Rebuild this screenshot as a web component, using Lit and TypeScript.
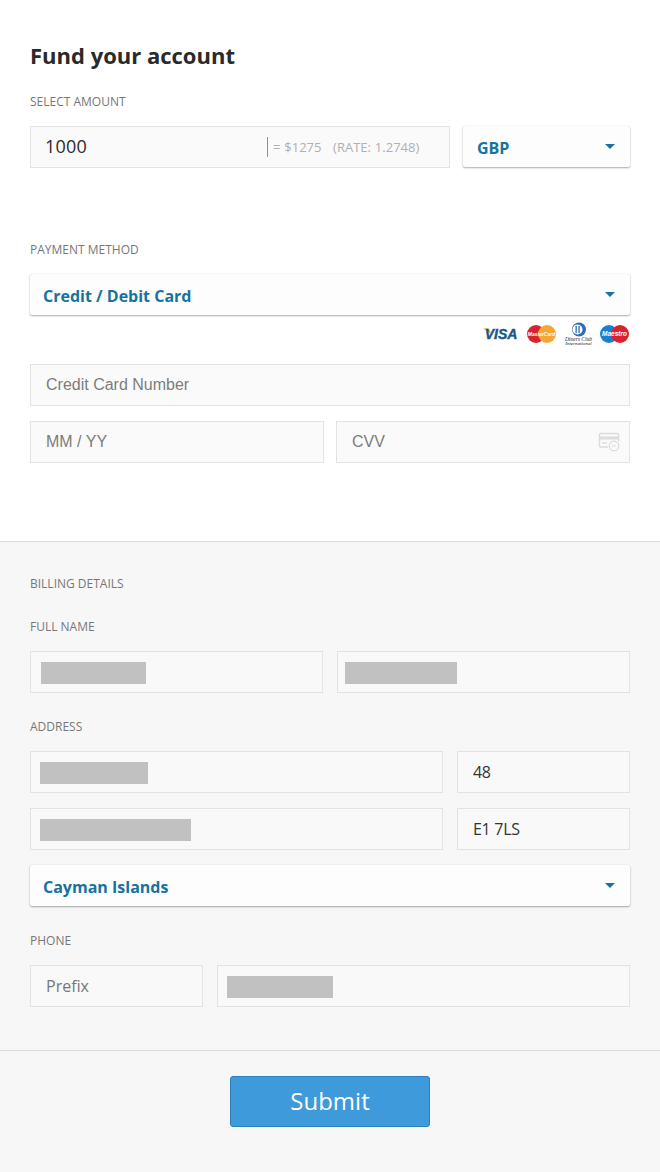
import { LitElement, html, css } from "lit";
import { customElement } from "lit/decorators.js";

@customElement("app-root")
export class AppRoot extends LitElement {
  static styles = css`
    :host { display: block; width: 660px; height: 1172px; background: #fff; font-family: "Open Sans", sans-serif; color: #2b2b2b; overflow: hidden; }
    * { box-sizing: border-box; }
    .top { height: 541px; padding: 40px 30px 0; background: #fff; }
    h1 { margin: 0; font-size: 22px; line-height: 30px; font-weight: 700; color: #2a2a2a; }
    .label { font-size: 12px; line-height: 16px; color: #777; text-transform: uppercase; }
    .l1 { margin-top: 24px; }
    .l2 { margin-top: 74px; }
    .row { display: flex; }
    .amount-row { margin-top: 16px; gap: 13px; align-items: flex-start; }
    .input { height: 42px; border: 1px solid #e3e3e3; background: #fafafa; display: flex; align-items: center; padding-left: 15px; font-size: 16px; position: relative; flex: none; }
    .amount { width: 420px; font-size: 18px; color: #2b2b2b; padding-left: 14px; padding-bottom: 2px; letter-spacing: 0.2px; }
    .conv { position: absolute; left: 236px; top: 10px; height: 20px; border-left: 1px solid #8f8f8f; padding-left: 5px; font-size: 13px; line-height: 20px; color: #b0b0b0; white-space: pre; letter-spacing: 0; word-spacing: 0.5px; }
    .select { height: 41px; background: #fdfdfd; border-radius: 2px; box-shadow: 0 1px 2px rgba(0,0,0,.32), 0 0 1px rgba(0,0,0,.14); display: flex; align-items: center; justify-content: space-between; padding: 2px 15px 0 13px; font-size: 16px; font-weight: 700; color: #16739f; flex: none; }
    .select.cur { width: 167px; padding-left: 14px; }
    .select.wide { width: 600px; }
    .caret { width: 0; height: 0; border-left: 5px solid transparent; border-right: 5px solid transparent; border-top: 5px solid #16739f; margin-top: -2px; }
    .pm { margin-top: 16px; }
    .cards { height: 30px; margin-top: 4px; display: flex; justify-content: flex-end; align-items: center; gap: 8px; padding-right: 1px; }
    .cards svg { overflow: visible; }
    .ph { font-family: "Liberation Sans", Arial, sans-serif; color: #7d7d7d; font-size: 16px; }
    .cc { width: 600px; margin-top: 15px; }
    .exp-row { margin-top: 15px; gap: 12px; }
    .half { width: 294px; }
    .cvv-icon { position: absolute; right: 9px; top: 10px; }
    .bottom { background: #f7f7f7; border-top: 1px solid #dcdcdc; height: 631px; padding: 0 30px; }
    .l3 { margin-top: 34px; }
    .l4 { margin-top: 27px; }
    .l5 { margin-top: 26px; }
    .l6 { margin-top: 27px; }
    .fields { margin-top: 16px; gap: 14px; }
    .f-input { background: #f9f9f9; font-size: 16px; letter-spacing: -0.3px; color: #333; }
    .f-half { width: 293px; }
    .f-addr { width: 413px; padding-left: 9px; }
    .f-no { width: 173px; }
    .f-pre { width: 173px; color: #777; letter-spacing: 0; }
    .f-phone { width: 413px; padding-left: 9px; }
    .f-half.a { padding-left: 10px; }
    .f-half.b { padding-left: 7px; }
    .mask { display: block; height: 22px; margin-top: 1px; background: #c1c1c1; }
    .gap15 { margin-top: 15px; }
    .footer { margin: 43px -30px 0; border-top: 1px solid #dcdcdc; padding-top: 25px; display: flex; justify-content: center; }
    .submit { width: 200px; height: 51px; background: #3f9adc; border: 1px solid #2f7fb8; border-radius: 3px; color: #fff; font-family: "Open Sans", sans-serif; font-size: 24px; padding: 0 0 2px; }
  `;

  render() {
    const caret = html`<span class="caret"></span>`;
    return html`
      <section class="top">
        <h1>Fund your account</h1>
        <div class="label l1">Select amount</div>
        <div class="row amount-row">
          <div class="input amount">1000<span class="conv">= $1275   (RATE: 1.2748)</span></div>
          <div class="select cur">GBP${caret}</div>
        </div>
        <div class="label l2">Payment method</div>
        <div class="select wide pm">Credit / Debit Card${caret}</div>
        <div class="cards">
          <svg width="36" height="24" viewBox="0 -4 36 24">
            <path d="M0 2.500h6l2 5z" fill="#e8a33a"/>
            <text x="18" y="13" text-anchor="middle" font-family="Liberation Sans, sans-serif" font-size="14" font-weight="700" font-style="italic" fill="#17568a" stroke="#17568a" stroke-width="0.4">VISA</text>
          </svg>
          <svg width="29" height="24" viewBox="0 -3 29 24">
            <circle cx="9" cy="9" r="9" fill="#d8232f"/>
            <circle cx="20" cy="9" r="9" fill="#f5a733"/>
            <text x="14.500" y="11" text-anchor="middle" font-family="Liberation Sans, sans-serif" font-size="5" font-weight="700" font-style="italic" fill="#fff">MasterCard</text>
          </svg>
          <svg width="28" height="24" viewBox="0 -1 28 24">
            <circle cx="15" cy="6.500" r="7" fill="#2f6cb3"/>
            <circle cx="13.500" cy="6.500" r="5" fill="#fff"/>
            <rect x="11.500" y="2.800" width="1.300" height="7.400" fill="#2f6cb3"/>
            <rect x="14.400" y="2.800" width="1.300" height="7.400" fill="#2f6cb3"/>
            <text x="14.500" y="17.500" text-anchor="middle" font-family="Liberation Serif, serif" font-size="5.500" font-style="italic" fill="#222">Diners Club</text>
            <text x="14.500" y="22" text-anchor="middle" font-family="Liberation Serif, serif" font-size="5" font-style="italic" fill="#222">International</text>
          </svg>
          <svg width="29" height="24" viewBox="0 -3 29 24">
            <circle cx="9" cy="9" r="9" fill="#1b7fd1"/>
            <circle cx="20" cy="9" r="9" fill="#d8232f"/>
            <text x="14.500" y="11.300" text-anchor="middle" font-family="Liberation Sans, sans-serif" font-size="6.500" font-weight="700" font-style="italic" fill="#fff">Maestro</text>
          </svg>
        </div>
        <div class="input cc ph">Credit Card Number</div>
        <div class="row exp-row">
          <div class="input half ph">MM / YY</div>
          <div class="input half ph">CVV
            <svg class="cvv-icon" width="22" height="20" viewBox="0 0 22 20" fill="none">
              <path d="M10 15H2.500A1 1 0 0 1 1.500 14V2.500A1 1 0 0 1 2.500 1.500H19.500A1 1 0 0 1 20.500 2.500V9" stroke="#dcdcdc" stroke-width="1.500"/>
              <rect x="1.500" y="4.500" width="19" height="3" fill="#dcdcdc"/>
              <path d="M4 11h5" stroke="#dcdcdc" stroke-width="1.500"/>
              <circle cx="16" cy="14" r="4.800" fill="#fafafa" stroke="#dcdcdc" stroke-width="1.200"/>
              <path d="M13.800 14h4.400" stroke="#dcdcdc" stroke-width="1"/>
            </svg>
          </div>
        </div>
      </section>
      <section class="bottom">
        <div class="label l3">Billing details</div>
        <div class="label l4">Full name</div>
        <div class="row fields">
          <div class="input f-input f-half a"><span class="mask" style="width:105px"></span></div>
          <div class="input f-input f-half b"><span class="mask" style="width:112px"></span></div>
        </div>
        <div class="label l5">Address</div>
        <div class="row fields">
          <div class="input f-input f-addr"><span class="mask" style="width:108px"></span></div>
          <div class="input f-input f-no">48</div>
        </div>
        <div class="row fields gap15">
          <div class="input f-input f-addr"><span class="mask" style="width:151px"></span></div>
          <div class="input f-input f-no">E1 7LS</div>
        </div>
        <div class="select wide gap15">Cayman Islands${caret}</div>
        <div class="label l6">Phone</div>
        <div class="row fields">
          <div class="input f-input f-pre">Prefix</div>
          <div class="input f-input f-phone"><span class="mask" style="width:106px"></span></div>
        </div>
        <div class="footer"><button class="submit">Submit</button></div>
      </section>
    `;
  }
}
